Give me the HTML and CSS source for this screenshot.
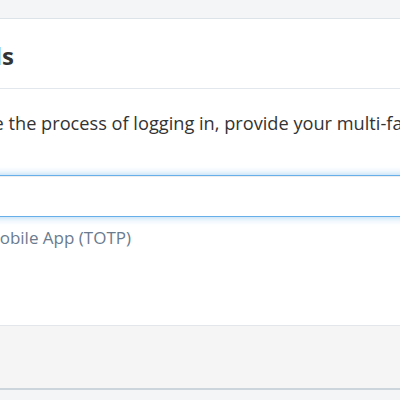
FILE: index.html
```html
<!DOCTYPE html>
<html lang="en">
<head>
    <meta charset="UTF-8">
    <meta name="viewport" content="width=device-width, initial-scale=1.0">
    <title>Multi-Factor Authentication</title>
    <link rel="stylesheet" href="styles.css">
</head>
<body>
    <div class="page">
        <div class="panel">
            <div class="panel-header">
                <h2 class="panel-title">Methods</h2>
            </div>
            <div class="panel-body">
                <p class="intro">To complete the process of logging in, provide your multi-factor authentication code.</p>
                <div class="form-group">
                    <input class="form-control focused" type="text" autocomplete="off">
                    <div class="help-block">Using your Mobile App (TOTP)</div>
                </div>
            </div>
            <div class="panel-footer"></div>
        </div>
    </div>
</body>
</html>
```

FILE: styles.css
```css
* {
    margin: 0;
    padding: 0;
    box-sizing: border-box;
}

body {
    font-family: 'Open Sans', 'Noto Sans', sans-serif;
    background: #f1f3f5;
    color: #333;
    overflow: hidden;
}

.page {
    background: #f4f5f6;
    padding-top: 18px;
    min-height: 400px;
}

/* panel is wider than the window and starts left of it */
.panel {
    width: 1000px;
    margin-left: -121px;
    background: #fff;
    border-top: 1px solid #dce3e9;
}

.panel-header {
    height: 70px;
    padding: 21px 20px 0 30px;
    border-bottom: 1px solid #e1e7ec;
}

.panel-title {
    font-size: 24px;
    line-height: 32px;
    font-weight: 700;
    color: #333;
}

.panel-body {
    padding: 21px 20px 0;
    height: 236px;
}

.intro {
    font-size: 18.2px;
    line-height: 26px;
    margin-bottom: 39px;
}

.form-control {
    display: block;
    width: 100%;
    height: 42px;
    border: 1px solid #ccc;
    border-radius: 3px;
    padding: 6px 12px;
    font: inherit;
    outline: none;
}

.form-control.focused {
    border-color: #66afe9;
    box-shadow: inset 0 1px 1px rgba(0, 0, 0, 0.075), 0 0 8px rgba(102, 175, 233, 0.6);
}

.help-block {
    margin-top: 9px;
    margin-left: -4px;
    font-size: 17px;
    line-height: 24px;
    color: #6b7b8e;
}

.panel-footer {
    height: 65px;
    background: #f5f5f5;
    border-top: 1px solid #e3e7eb;
    border-bottom: 2px solid #cdd5dc;
}
```
